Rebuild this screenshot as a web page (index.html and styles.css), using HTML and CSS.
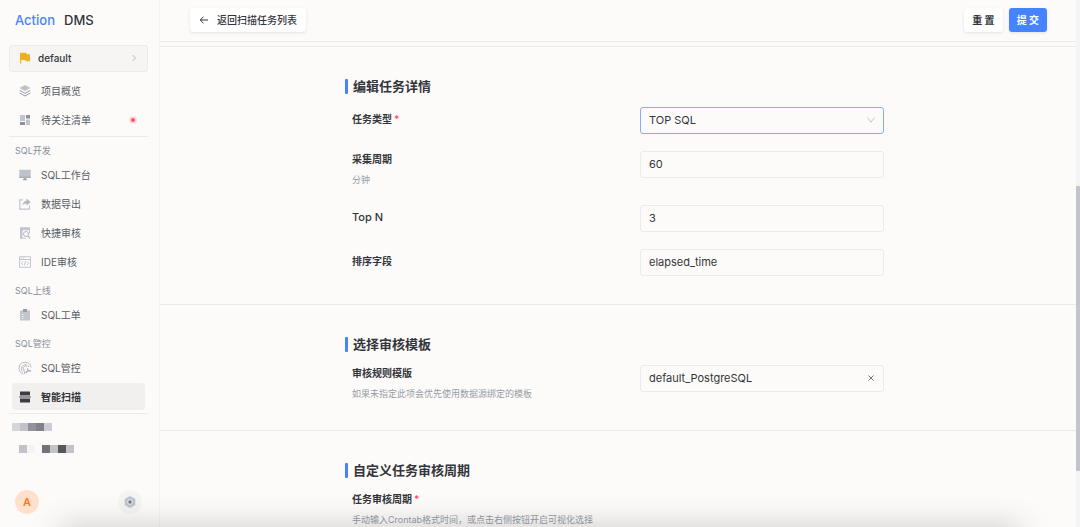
FILE: index.html
```html
<!DOCTYPE html>
<html lang="zh-CN">
<head>
<meta charset="utf-8">
<meta name="viewport" content="width=device-width, initial-scale=1">
<title>Action DMS</title>
<link rel="stylesheet" href="styles.css">
</head>
<body>
<div class="app">
  <aside class="sidebar">
    <div class="brand"><span class="brand-accent">Action</span><span>DMS</span></div>
    <button class="project" type="button">
      <svg class="flag" viewBox="0 0 12 12" width="12" height="12"><path fill="#efb01f" d="M1 .7h6.3l.5 1.5H11v7H6.7L6.1 8H2.2v3.6H1z"/></svg>
      <span>default</span>
      <svg class="project-arrow" viewBox="0 0 8 8" width="8" height="8"><path fill="none" stroke="#b4b7bf" d="M2.5 1l3 3-3 3"/></svg>
    </button>
    <nav class="nav">
      <div class="nav-group">
        <a class="nav-item" href="#"><svg viewBox="0 0 12 12"><path fill="#bfc2ca" d="M6 0l5.500 3L6 6 .5 3z"/><path fill="none" stroke="#989ca8" d="M.7 5.400L6 8.300l5.300-2.900M.7 8L6 11l5.300-3"/></svg>项目概览</a>
        <a class="nav-item" href="#"><svg viewBox="0 0 12 12"><path fill="#c2c5cd" d="M1 1h5v6H1zM7 5.500h4V11H7z"/><path fill="#8d919d" d="M7 1h4v3.500H7zM1 8h5v3H1z"/></svg>待关注清单<span class="alert-dot"></span></a>
      </div>
      <hr class="rule">
      <div class="nav-group">
        <h2 class="nav-title">SQL开发</h2>
        <a class="nav-item" href="#"><svg viewBox="0 0 12 12"><path fill="#bfc2ca" d="M.3.8h11.400v7.700H.3z"/><path fill="#989ca8" d="M.3 7.700h11.400v1H.3zM5 9.200h2l1.300 2H3.700z"/></svg>SQL工作台</a>
        <a class="nav-item" href="#"><svg viewBox="0 0 12 12"><path fill="none" stroke="#c2c5cd" stroke-width="1.200" d="M4 1.800H.8v9.400h9.700V7.500"/><path fill="#b4b7c0" d="M7.500.5l4.200 3.600-4.200 3.600V5.500C5.500 5.500 4.300 6.200 3.400 8 3.500 4.800 5 3 7.500 2.700z"/></svg>数据导出</a>
        <a class="nav-item" href="#"><svg viewBox="0 0 12 12"><path fill="#c2c5cd" d="M1 .3h10v3H1zM1 3h2.500v8.700H1z"/><path fill="none" stroke="#c2c5cd" d="M10.500 3v3.500M3 11.200h4"/><circle cx="7" cy="7" r="2.500" fill="none" stroke="#b4b7c0"/><path stroke="#b4b7c0" stroke-width="1.200" d="M8.800 9l2.400 2.500"/></svg>快捷审核</a>
        <a class="nav-item" href="#"><svg viewBox="0 0 12 12"><path fill="none" stroke="#c2c5cd" d="M.5.7h11v10.600H.5zM.5 3.500h11M2 2.100h1M4 2.100h1"/><path fill="none" stroke="#b4b7c0" stroke-width=".8" d="M4 5.500L2.500 7.200 4 9M8 5.500l1.500 1.700L8 9M6.600 5.200L5.400 9.300"/></svg>IDE审核</a>
      </div>
      <div class="nav-group">
        <h2 class="nav-title">SQL上线</h2>
        <a class="nav-item" href="#"><svg viewBox="0 0 12 12"><path fill="#c2c5cd" d="M1 1.500h10v10H1z"/><path fill="#989ca8" d="M4 0h4v3H4z"/><path stroke="#f5f5f6" d="M3 5.500h1.200M3 7.500h1.200M3 9.500h1.200"/></svg>SQL工单</a>
      </div>
      <div class="nav-group">
        <h2 class="nav-title">SQL管控</h2>
        <a class="nav-item" href="#"><svg viewBox="0 0 12 12"><path fill="none" stroke="#b9bcc5" d="M4.400 12A6 6 0 1 1 12 5.300M3.500 9.500A4 4 0 1 1 10 5M4.500 7.500A2 2 0 1 1 7.800 5M4.700 7l1.100 5"/><path fill="none" stroke="#b0b3bd" stroke-width="1.500" d="M6.500 11l2.600-2.500M9 6.500c-1 1.500.5 3.200 3 2"/></svg>SQL管控</a>
        <a class="nav-item nav-item-active" href="#"><svg viewBox="0 0 12 12"><path fill="#3b3c40" d="M1 .5h10v4H1zM1 7.500h10v4H1z"/><path fill="#3b3c40" d="M.2 5.500h11.600v1H.2z"/></svg>智能扫描</a>
      </div>
      <hr class="rule">
    </nav>
    <div class="masked masked-title"><i class="m1"></i><i class="m2"></i><i class="m3"></i><i class="m4"></i><i class="m5"></i></div>
    <div class="masked masked-item"><i class="m2"></i><i class="m0"></i><i class="gap"></i><i class="m6"></i><i class="m2"></i><i class="m7"></i><i class="m2"></i></div>
    <div class="account">
      <button class="avatar" type="button">A</button>
      <button class="settings" type="button" aria-label="设置"><svg viewBox="0 0 12 12" width="12" height="12"><path fill="#c0c3cb" d="M6 0l5.300 3v6L6 12 .7 9V3z"/><circle cx="6" cy="6" r="2.300" fill="#797d88" stroke="#f5f5f5"/></svg></button>
    </div>
  </aside>

  <main class="main">
    <header class="topbar">
      <button class="btn btn-back" type="button"><svg viewBox="0 0 10 10" width="10" height="10"><path fill="none" stroke="#33353b" d="M9 5H1.500M4.500 1.700L1.200 5l3.300 3.300"/></svg>返回扫描任务列表</button>
      <div class="actions">
        <button class="btn" type="button">重 置</button>
        <button class="btn btn-primary" type="button">提 交</button>
      </div>
    </header>
    <form class="form">
      <section class="section">
        <div class="section-inner">
          <h1 class="section-title">编辑任务详情</h1>
          <div class="row">
            <label class="label" for="type">任务类型<span class="required">*</span></label>
            <div class="control">
              <select class="field field-focus" id="type"><option>TOP SQL</option></select>
              <svg class="suffix" viewBox="0 0 10 10" width="10" height="10"><path fill="none" stroke="#c3c4c8" d="M1.500 2.500L5 7.200l3.500-4.700"/></svg>
            </div>
          </div>
          <div class="row row-hint">
            <div><label class="label" for="period">采集周期</label><p class="hint">分钟</p></div>
            <input class="field" id="period" type="text" value="60">
          </div>
          <div class="row">
            <label class="label label-latin" for="topn">Top N</label>
            <input class="field" id="topn" type="text" value="3">
          </div>
          <div class="row">
            <label class="label" for="sort">排序字段</label>
            <input class="field" id="sort" type="text" value="elapsed_time">
          </div>
        </div>
      </section>
      <section class="section">
        <div class="section-inner">
          <h1 class="section-title">选择审核模板</h1>
          <div class="row row-hint">
            <div><label class="label" for="template">审核规则模版</label><p class="hint">如果未指定此项会优先使用数据源绑定的模板</p></div>
            <div class="control">
              <select class="field" id="template"><option>default_PostgreSQL</option></select>
              <button class="suffix clear" type="button" aria-label="清除"><svg viewBox="0 0 10 10" width="10" height="10"><path stroke="#6b6f79" d="M2.500 2.500l5 5M7.500 2.500l-5 5"/></svg></button>
            </div>
          </div>
        </div>
      </section>
      <section class="section">
        <div class="section-inner">
          <h1 class="section-title">自定义任务审核周期</h1>
          <div class="row row-hint">
            <div><span class="label">任务审核周期<span class="required">*</span></span><p class="hint">手动输入Crontab格式时间，或点击右侧按钮开启可视化选择</p></div>
          </div>
        </div>
      </section>
    </form>
  </main>
  <div class="scroll-track"><div class="scroll-thumb"></div></div>
  <div class="bottom-shade"></div>
</div>
</body>
</html>
```

FILE: styles.css
```css
* { box-sizing: border-box; }

body {
  margin: 0;
  background: #fcfbf9;
  color: #33353b;
  font: 10px/16px Inter, "Noto Sans CJK SC", sans-serif;
}

button, input, select { font: inherit; color: inherit; }
button { cursor: pointer; }
h1, h2, p { margin: 0; }

.app {
  position: relative;
  display: flex;
  height: 100vh;
  overflow: hidden;
}

/* Sidebar */
.sidebar {
  display: flex;
  flex-direction: column;
  flex: 0 0 160px;
  padding: 10px 11px 13px 9px;
  border-right: 1px solid #f4f3f2;
}

.brand {
  display: flex;
  gap: 9px;
  padding-left: 6px;
  font-size: 13px;
  line-height: 20px;
  font-weight: 500;
}
.brand-accent { color: #4583ff; }

.project {
  display: flex;
  align-items: center;
  gap: 7px;
  height: 27px;
  margin-top: 15px;
  padding: 0 9px 1px;
  border: 1px solid #ebebea;
  border-radius: 3px;
  background: #f6f5f4;
  font-size: 10px;
  font-weight: 500;
}
.project-arrow { margin-left: auto; }

.nav { padding-top: 5px; }

.nav-group {
  display: flex;
  flex-direction: column;
  gap: 2px;
}
.nav-group + .nav-group { margin-top: 8px; }

.nav-title {
  padding-left: 6px;
  color: #8a8e99;
  font-size: 9px;
  line-height: 16px;
  font-weight: 400;
}

.nav-item {
  display: flex;
  align-items: center;
  gap: 10px;
  height: 27px;
  margin: 0 3px;
  padding: 0 7px;
  border-radius: 3px;
  color: #575b66;
  font-weight: 400;
  text-decoration: none;
}
.nav-item svg { width: 12px; height: 12px; overflow: visible; }
.nav-item-active {
  background: #f1f0ef;
  color: #33353b;
  font-weight: 600;
}

.alert-dot {
  width: 4px;
  height: 4px;
  margin: 0 3px 0 auto;
  border-radius: 50%;
  background: #fb5264;
  box-shadow: 0 0 0 2px #fddcdf;
}

.rule {
  height: 1px;
  margin: 3px 0 6px;
  border: 0;
  background: #ebebea;
}

.masked { display: flex; height: 8px; }
.masked i { width: 8px; }
.masked-title { margin: 3px 0 0 3px; }
.masked-item { margin: 14px 0 0 10px; }
.masked .gap { width: 7px; }
.m0 { background: #f4f4f4; }
.m1 { background: #d5d6d7; }
.m2 { background: #c3c2c8; }
.m3 { background: #929299; }
.m4 { background: #82818a; }
.m5 { background: #cecdd6; }
.m6 { background: #727377; }
.m7 { background: #56575b; }

.account {
  display: flex;
  justify-content: space-between;
  margin-top: auto;
  padding: 0 6px;
}
.avatar, .settings {
  display: grid;
  place-items: center;
  width: 24px;
  height: 24px;
  padding: 0;
  border: 0;
  border-radius: 50%;
}
.avatar {
  background: #fee0cd;
  color: #ff7a1c;
  font-size: 11px;
  font-weight: 600;
}
.settings { background: #f4f4f3; }

/* Main column */
.main {
  flex: 1;
  min-width: 0;
  overflow: hidden;
}

.topbar {
  display: flex;
  align-items: center;
  justify-content: space-between;
  height: 42px;
  padding: 0 29px 2px 30px;
  border-bottom: 1px solid #ebebea;
}
.actions { display: flex; gap: 6px; }

.btn {
  display: flex;
  align-items: center;
  gap: 7px;
  height: 24px;
  padding: 0 8px;
  border: 0;
  border-radius: 3px;
  background: #fff;
  box-shadow: 0 1px 3px rgba(0, 0, 0, .1);
  font-weight: 500;
}
.btn-back { padding: 0 9px; gap: 8px; }
.actions .btn { font-weight: 700; }
.btn-primary {
  background: #4583ff;
  color: #fff;
}

.form {
  margin-top: 4px;
  border-top: 1px solid #ebebea;
}

.section {
  padding: 30px 24px 28px;
  border-bottom: 1px solid #ebebea;
}

.section-inner {
  display: flex;
  flex-direction: column;
  gap: 17px;
  max-width: 532px;
  margin: 0 auto;
}

.section-title {
  display: flex;
  align-items: center;
  gap: 5px;
  margin: 0 0 -5px -7px;
  font-size: 13px;
  line-height: 18px;
  font-weight: 600;
}
.section-title::before {
  content: "";
  width: 3px;
  height: 15px;
  border-radius: 1px;
  background: #4583ff;
}

.row {
  display: grid;
  grid-template-columns: 288fr 244fr;
  align-items: start;
}

.label {
  display: block;
  line-height: 24px;
  font-weight: 600;
}
.label-latin {
  font-size: 11px;
  font-weight: 500;
}
.row-hint .label { line-height: 17px; }

.required {
  margin-left: 2px;
  color: #fb5264;
}

.hint {
  margin-top: 4px;
  color: #989ca6;
  font-size: 9px;
  line-height: 16px;
}

.control { position: relative; }

.field {
  display: block;
  width: 100%;
  height: 27px;
  padding: 0 8px 2px;
  border: 1px solid #ebebea;
  border-radius: 3px;
  outline: 0;
  background: transparent;
  font-size: 11px;
  appearance: none;
}
.field-focus { border-color: #82adff; }

.suffix {
  position: absolute;
  top: 8px;
  right: 8px;
}
.clear {
  display: flex;
  padding: 0;
  border: 0;
  background: none;
}

/* Scrollbar */
.scroll-track {
  display: flow-root;
  flex: 0 0 4px;
  background: #f4f4f5;
}
.scroll-thumb {
  height: 54%;
  margin-top: 35.3vh;
  border-radius: 1px;
  background: #c3c5ce;
}

.bottom-shade {
  position: absolute;
  right: 60px;
  bottom: -22px;
  left: 60px;
  height: 20px;
  box-shadow: 0 0 32px rgba(0, 0, 0, .26);
  pointer-events: none;
}
```
